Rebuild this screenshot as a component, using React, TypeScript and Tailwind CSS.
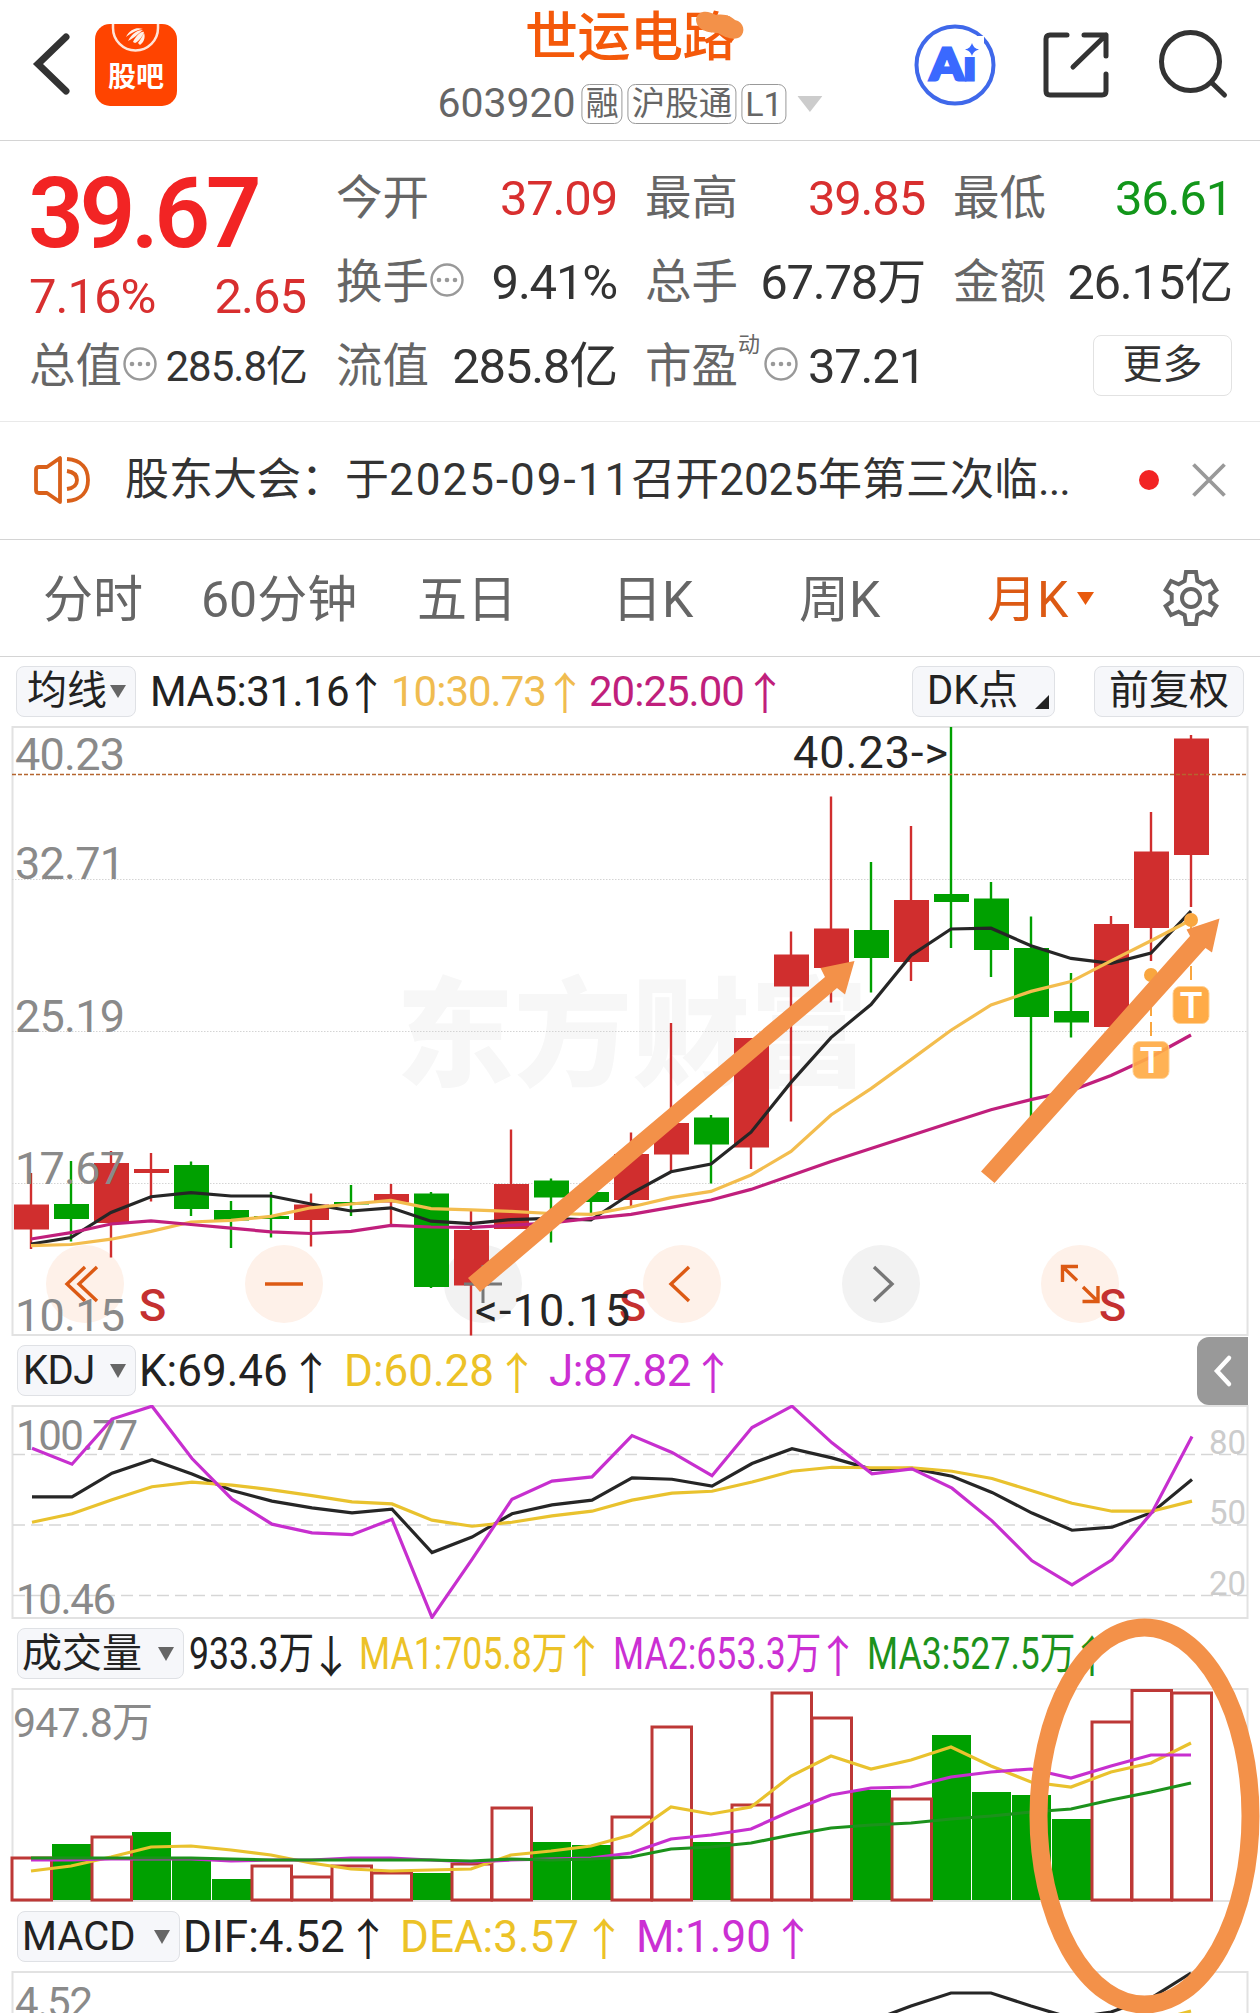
import type { ReactNode } from "react";
import clsx from "clsx";

type Candle = [up: boolean, high: number, top: number, bottom: number, low: number];

const RED = "#d02e2e";
const GREEN = "#00a000";
const ORANGE = "#f39149";

const candles: Candle[] = [
  [true, 453, 484.5, 509.5, 529],
  [false, 441, 484, 499, 521.5],
  [true, 431, 443, 503, 537.5],
  [true, 433, 449, 453, 481.5],
  [false, 441.5, 445, 489, 496],
  [false, 481, 490, 500.5, 528],
  [false, 472, 496, 499, 517.5],
  [true, 473.5, 484.5, 500, 526.5],
  [false, 465, 482, 484.5, 496],
  [true, 464, 474, 482.5, 505],
  [false, 472, 473.5, 567, 568],
  [true, 490, 510, 565.5, 615.5],
  [true, 409.5, 464, 509, 509],
  [false, 458.5, 460.5, 477.5, 522.5],
  [false, 469.5, 472, 482, 496],
  [true, 412.5, 434, 480, 486.5],
  [true, 303, 403, 434.5, 451],
  [false, 395, 397.5, 424.5, 463.5],
  [true, 318, 318, 427.5, 449],
  [true, 211.5, 234.5, 266.5, 401.5],
  [true, 76.5, 208.5, 248, 282.5],
  [false, 142, 210, 238, 272.5],
  [true, 106, 180, 242, 261],
  [false, 7, 174, 182, 228],
  [false, 162, 178.5, 230, 257],
  [false, 196.5, 228, 297, 400],
  [false, 253, 291, 302.5, 317.5],
  [true, 196, 204, 307, 307],
  [true, 92, 131.5, 208, 241],
  [true, 15, 18.5, 135, 187],
];

const ma5 = [
  524, 517.5, 492.5, 476.7, 472.7, 476, 476, 484, 491, 487.8, 501.2, 503.7,
  499.6, 498.4, 500, 473.5, 451.8, 444, 412.2, 362.4, 317.6, 284.5, 235.5, 209,
  208.2, 225.7, 238.4, 243.3, 233, 191,
];
const ma10 = [
  525.7, 524.5, 519.2, 511.4, 502, 500.4, 496.3, 487.8, 484, 480.4, 488.6,
  489.8, 491.4, 493.5, 494.3, 487, 477.6, 471.4, 455, 431.4, 395, 368.6, 339.6,
  310.2, 285, 271.4, 261.6, 240.8, 220.8, 200,
];
const ma20 = [
  519, 512.7, 504, 500.8, 504.5, 508.2, 511.8, 513.5, 511.4, 505.3, 507, 507.3,
  505.3, 502.9, 498.4, 494.3, 487.3, 480, 469.4, 455.5, 441.6, 428.6, 415.5,
  402.4, 389.8, 379.6, 370.6, 355.5, 337, 315,
];

const kLine = [
  62.1, 62.1, 72.2, 77.9, 71.8, 64.8, 60.3, 57.4, 55.3, 56.9, 38.4, 45, 54.9,
  58.7, 60.7, 70.2, 69.6, 66.7, 76.3, 82.6, 78.7, 73.8, 74.2, 70.9, 64, 55.2,
  47.9, 49.2, 55.5, 69.5,
];
const dLine = [
  51.3, 54.9, 60.9, 66.4, 68.4, 67.1, 65.1, 62.6, 60, 59.1, 52.2, 49.6, 51.3,
  54, 56, 60.7, 63.7, 64.5, 68.4, 73, 74.7, 74.5, 74.5, 73, 69.9, 64.7, 59.4,
  56, 56, 60.3,
];
const jLine = [
  82.8, 76, 95.2, 100.7, 78.4, 61.1, 50.5, 46.8, 46, 52.6, 10.8, 35.5, 61.1,
  68.8, 70.6, 88.2, 81, 71.1, 91.6, 100.7, 85.1, 71.9, 74, 65.8, 51.9, 34.9,
  24.7, 35.3, 55.5, 87.8,
];

const volTops = [
  168, 155, 147, 143, 170, 190, 176, 187, 176, 183, 184, 174, 118, 153, 156,
  127, 37, 153, 115, 3, 28, 101, 109, 46, 103, 106, 130, 32, 0.5, 3,
];
const volUp = [0, 2, 6, 7, 8, 9, 11, 12, 15, 16, 18, 19, 20, 22, 27, 28, 29];
const vma1 = [
  182, 177, 168, 158, 157, 161, 166, 174, 180, 182, 181, 180, 166, 162, 157,
  146, 118, 125, 118, 87, 67, 80, 71, 58, 77, 93, 98, 83, 74, 54,
];
const vma2 = [
  171, 171, 170, 170, 170, 172, 171, 171, 169, 169, 171, 173, 171, 170, 169,
  164, 150, 146, 140, 122, 106, 99, 98, 88, 83, 80, 89, 77, 66, 66,
];
const vma3 = [
  169, 169, 169, 169, 169, 170, 171, 171, 171, 171, 171, 172, 170, 171, 170,
  168, 160, 158, 154, 146, 139, 136, 134, 130, 127, 123, 120, 111, 103, 94,
];

const toPoints = (ys: number[], scale = (v: number) => v, x0 = 31) =>
  ys.map((v, i) => `${x0 + i * 40},${scale(v)}`).join(" ");

const kdjY = (v: number) => (100.77 - v) * 2.35;

function Line({ points, color }: { points: string; color: string }) {
  return <polyline points={points} fill="none" stroke={color} strokeWidth="3.2" />;
}

function Dots() {
  return (
    <svg className="mb-[5px] ml-[1px] h-[34px] w-[34px] shrink-0" viewBox="0 0 34 34">
      <circle cx="17" cy="17" r="15.5" fill="none" stroke="#999" strokeWidth="2.4" />
      <circle cx="9" cy="17" r="2.3" fill="#999" />
      <circle cx="17" cy="17" r="2.3" fill="#999" />
      <circle cx="25" cy="17" r="2.3" fill="#999" />
    </svg>
  );
}

function Triangle({ className }: { className: string }) {
  return (
    <svg className={clsx("shrink-0", className)} viewBox="0 0 16 14" preserveAspectRatio="none">
      <path d="M0 0H16L8 14Z" fill="currentColor" />
    </svg>
  );
}

function Stat({
  label,
  value,
  extra,
  className = "text-[#333]",
}: {
  label: string;
  value: string;
  extra?: ReactNode;
  className?: string;
}) {
  return (
    <div className="flex h-[84px] items-center pt-[3px]">
      <span className="text-[46.5px] text-[#666]">{label}</span>
      {extra}
      <span className={clsx("-mr-[2px] ml-auto text-[49px] tracking-[-1.2px]", className)}>{value}</span>
    </div>
  );
}

function Pill({ children, className }: { children: ReactNode; className?: string }) {
  return (
    <div
      className={clsx(
        "flex h-[51px] shrink-0 items-center rounded-lg border-[1.5px] border-[#dfe1e5] bg-[#f6f7fa] text-[40px] text-[#222]",
        className,
      )}
    >
      {children}
    </div>
  );
}

function Legend({
  text,
  arrow,
  className,
  inner,
}: {
  text: string;
  arrow: string;
  className: string;
  inner?: string;
}) {
  return (
    <div className={clsx("flex shrink-0 items-center justify-between", className)}>
      <span className={clsx("w-0 origin-left whitespace-nowrap", inner)}>{text}</span>
      <span className="flex w-[22px] justify-center font-['Noto_Sans_CJK_SC',sans-serif] text-[44px] leading-[44px]">
        {arrow}
      </span>
    </div>
  );
}

function Header() {
  return (
    <header className="relative flex h-[141px] items-start border-b border-[#d4d4d4]">
      <svg className="mt-[32px] ml-[32px] h-[64px] w-[40px]" viewBox="0 0 40 64">
        <path d="M34 5L6 32L34 59" fill="none" stroke="#333" strokeWidth="7" strokeLinecap="round" />
      </svg>
      <div className="relative mt-[24px] ml-[23px] h-[82px] w-[82px] overflow-hidden rounded-[15px] bg-[#ff4400]">
        <svg className="absolute inset-0" viewBox="0 0 82 82">
          <path d="M18 -2V4A22.5 22.5 0 0 0 63 4V-2" fill="none" stroke="#ffe4d8" strokeWidth="2.5" />
          <path
            d="M31 13C35 5 42 3 48 5C44 5 36 9 31 13ZM33 17C37 9 43 6 48 6C44 9 38 15 33 17ZM38 18C41 12 46 7 49 8C48 12 43 18 40 19ZM43 19C46 15 48 11 49 9C51 14 48 19 45 21Z"
            fill="#fff0e8"
          />
        </svg>
        <span className="mt-[34px] block text-center text-[28px] leading-[40px] font-bold text-white">
          股吧
        </span>
      </div>
      <div className="absolute left-1/2 flex -translate-x-1/2 flex-col items-center">
        <h1 className="mt-[5px] text-[53px] leading-[66px] font-medium tracking-[-0.5px] text-[#f4590a]">
          世运电路
        </h1>
        <div className="mt-[12px] flex h-[42px] items-center gap-[5px] text-[#666]">
          <span className="mr-[1px] text-[41px]">603920</span>
          <span className="rounded-lg border-[1.5px] border-[#999] px-[3px] text-[33px] leading-[38px]">融</span>
          <span className="rounded-lg border-[1.5px] border-[#999] px-[3px] text-[33.5px] leading-[38px]">沪股通</span>
          <span className="rounded-lg border-[1.5px] border-[#999] px-[3px] text-[34px] leading-[38px]">L1</span>
          <Triangle className="ml-[6px] h-[16px] w-[25px] text-[#ccc]" />
        </div>
      </div>
      <svg className="mt-[24px] ml-auto h-[82px] w-[82px]" viewBox="0 0 82 82">
        <circle cx="41" cy="41" r="38.5" fill="none" stroke="#3f68ea" strokeWidth="4" />
        <text
          x="16"
          y="56"
          fontSize="44"
          fontWeight="900"
          fill="#3a69ff"
          stroke="#3a69ff"
          strokeWidth="3"
          fontFamily="Lato, sans-serif"
          textLength="46"
          lengthAdjust="spacingAndGlyphs"
        >
          Ai
        </text>
        <path d="M47 12H70V33H47Z" fill="#fff" />
        <path d="M58 19C59.5 23 61 24.5 65 25.5C61 26.5 59.5 28 58 32C56.5 28 55 26.5 51 25.5C55 24.5 56.5 23 58 19Z" fill="#3a69ff" />
      </svg>
      <svg className="mt-[30px] ml-[45px] h-[70px] w-[70px]" viewBox="0 0 70 70">
        <g fill="none" stroke="#333" strokeWidth="5" strokeLinecap="round" strokeLinejoin="round">
          <path d="M26 5H9Q5 5 5 9V61Q5 65 9 65H61Q65 65 65 61V44" />
          <path d="M43 5H65V26M65 5L32 37" />
        </g>
      </svg>
      <svg className="mt-[28px] mr-[30px] ml-[45px] h-[74px] w-[74px]" viewBox="0 0 74 74">
        <g fill="none" stroke="#333" strokeWidth="5" strokeLinecap="round">
          <circle cx="34.5" cy="33.5" r="29" />
          <path d="M56 55L68.5 67" />
        </g>
      </svg>
    </header>
  );
}

function Quote() {
  return (
    <section className="grid h-[281px] grid-cols-[276px_279px_278px_277px] gap-x-[30px] border-b border-[#e9e9e9] pt-[14px] pl-[30px]">
      <div>
        <div className="-ml-[2px] flex h-[100px] items-center pt-[17px] text-[98px] leading-none font-semibold tracking-[-4.5px] text-[#f22424]">
          39.67
        </div>
        <div className="-ml-[1px] flex h-[68px] items-center justify-between pt-[15px] text-[49px] tracking-[-1px] text-[#d82f2f]">
          <span>7.16%</span>
          <span>2.65</span>
        </div>
        <div className="-mr-[1px] -ml-[1px] flex h-[84px] items-center pt-[3px]">
          <span className="text-[46.5px] text-[#666]">总值</span>
          <Dots />
          <span className="ml-auto text-[42px] tracking-[-1px] text-[#333]">285.8亿</span>
        </div>
      </div>
      <div>
        <Stat label="今开" value="37.09" className="text-[#d82f2f]" />
        <Stat label="换手" value="9.41%" extra={<Dots />} />
        <Stat label="流值" value="285.8亿" />
      </div>
      <div>
        <Stat label="最高" value="39.85" className="text-[#d82f2f]" />
        <Stat label="总手" value="67.78万" />
        <Stat
          label="市盈"
          value="37.21"
          extra={
            <>
              <span className="mb-[44px] w-[25px] text-[22px] text-[#666]">动</span>
              <Dots />
            </>
          }
        />
      </div>
      <div>
        <Stat label="最低" value="36.61" className="text-[#12961a]" />
        <Stat label="金额" value="26.15亿" />
        <div className="-mr-[2px] flex h-[84px] items-center justify-end">
          <button className="h-[61px] w-[139px] rounded-lg border-[1.5px] border-[#e2e2e2] text-[40px] leading-[56px] text-[#333]">
            更多
          </button>
        </div>
      </div>
    </section>
  );
}

function Notice() {
  return (
    <section className="flex h-[118px] items-center border-b border-[#d4d4d4] pb-[2px] pl-[32px]">
      <svg className="h-[52px] w-[60px]" viewBox="0 0 60 52">
        <g fill="none" stroke="#d9601a" strokeWidth="3.8" strokeLinejoin="round">
          <path d="M28 4V48L15 39H7Q4 39 4 36V16Q4 13 7 13H15Z" />
          <path d="M35 5C50 6 56 15 56 26C56 37 50 46 35 47" />
          <path d="M35 17C42 18 45 21 45 26C45 31 42 34 35 35" />
        </g>
      </svg>
      <span className="ml-[33px] text-[44px] whitespace-nowrap text-[#333]">
        股东大会：于<span className="tracking-[2px]">2025-09-11</span>召开2025年第三次临
        <span className="tracking-[-1px]">...</span>
      </span>
      <span className="ml-auto h-[20px] w-[20px] rounded-full bg-[#f22424]" />
      <svg className="mr-[34px] ml-[33px] h-[34px] w-[34px]" viewBox="0 0 34 34">
        <path d="M1.5 1.5L32.5 32.5M32.5 1.5L1.5 32.5" stroke="#999" strokeWidth="3.8" />
      </svg>
    </section>
  );
}

function Tabs() {
  return (
    <nav className="flex h-[117px] items-center border-b border-[#d4d4d4] pl-[43px] text-[50px] text-[#666]">
      <span className="w-[158px] pt-[5px]">分时</span>
      <span className="w-[216px] pt-[5px]">60分钟</span>
      <span className="w-[195px] pt-[5px]">五日</span>
      <span className="w-[187px] pt-[5px]">日K</span>
      <span className="w-[188px] pt-[5px]">周K</span>
      <span className="pt-[5px] text-[#dc5a14]">月K</span>
      <Triangle className="ml-[9px] h-[13px] w-[17px] text-[#e8590c]" />
      <svg className="mr-[40px] ml-auto h-[58px] w-[58px]" viewBox="-87 -87 174 174">
        <g fill="none" stroke="#666" strokeWidth="12">
          <path d="M-15 -78H15L19 -51L37 -41L60 -51L76 -24L58 -11V11L76 24L60 51L37 41L19 51L15 78H-15L-19 51L-37 41L-60 51L-76 24L-58 11V-11L-76 -24L-60 -51L-37 -41L-19 -51Z" />
          <circle r="27" />
        </g>
      </svg>
    </nav>
  );
}

function PriceChart() {
  return (
    <svg className="block h-[616px] w-full" viewBox="0 0 1260 616" fontFamily="inherit">
      <text x="396" y="357" fontSize="118" fontWeight="900" fill="#f7f7f7">
        东方财富
      </text>
      <rect x="12.5" y="7" width="1235" height="608" fill="none" stroke="#e2e2e2" strokeWidth="2" />
      {[159.5, 311.5, 463.5].map((y) => (
        <path key={y} d={`M12 ${y}H1247`} stroke="#d4d4d4" strokeDasharray="1.5 1.5" />
      ))}
      {[85, 284, 483, 682, 881, 1080].map((x) => (
        <circle key={x} cx={x} cy="564" r="39" fill={x === 483 || x === 881 ? "#f2f2f2" : "#fef1e9"} />
      ))}
      <g fill="none" stroke="#dc5a14" strokeWidth="3.4">
        <path d="M85 547L67 564L85 581M97 547L79 564L97 581" />
        <path d="M265 564H303" />
        <path d="M689 547L671 564L689 581" />
        <path d="M1078 546.5H1062.5V562M1062.5 546.5L1077 560.5M1098 566V581.5H1082.5M1098 581.5L1083 567" />
        <path d="M874 547L892 564L874 581" stroke="#777" />
      </g>
      {candles.map(([up, high, top, bottom, low], i) => {
        const fill = up ? RED : GREEN;
        const x = 31 + i * 40;
        return (
          <g key={i} fill={fill}>
            <rect x={x - 1.2} y={high} width="2.4" height={low - high} />
            <rect x={x - 17} y={top} width="35" height={bottom - top} />
          </g>
        );
      })}
      <path d="M464 564H502M483 545V583" stroke="#777" strokeWidth="3" />
      <path d="M12 54.5H1247" stroke="#b5652f" strokeWidth="1.3" strokeDasharray="4 2" />
      <Line points={toPoints(ma5)} color="#262626" />
      <Line points={toPoints(ma10)} color="#f3bd4e" />
      <Line points={toPoints(ma20)} color="#c01f7c" />
      <g fontSize="45" fill="#8a8a8a">
        <text x="15" y="50" textLength="110">40.23</text>
        <text x="15" y="159" textLength="110">32.71</text>
        <text x="15" y="312" textLength="110">25.19</text>
        <text x="15" y="464" textLength="110">17.67</text>
        <text x="15" y="611" textLength="110">10.15</text>
      </g>
      <g fontSize="45" fontWeight="500" fill="#c43030">
        <text x="139" y="601">S</text>
        <text x="619" y="601">S</text>
        <text x="1099" y="601">S</text>
      </g>
      <g fontSize="45" fill="#262626">
        <text x="793" y="48" textLength="155">{"40.23->"}</text>
        <text x="475" y="606" textLength="155">{"<-10.15"}</text>
      </g>
      <g fill="#f9a63f">
        <circle cx="1191" cy="200" r="7" />
        <circle cx="1151" cy="255" r="7" />
        <path d="M1191 206V266M1151 262V321" stroke="#f9a63f" strokeWidth="2" strokeDasharray="14 6" />
        <rect x="1173" y="266.5" width="36" height="37" rx="7" fill="#ffab47" stroke="#ffd296" />
        <rect x="1133" y="321.5" width="36" height="37" rx="7" fill="#ffab47" fillOpacity="0.92" stroke="#ffd296" />
      </g>
      <g fontSize="37" fontWeight="600" fill="#fff" textAnchor="middle">
        <text x="1191" y="298">T</text>
        <text x="1151" y="353">T</text>
      </g>
    </svg>
  );
}

function KdjChart() {
  return (
    <svg className="block h-[214px] w-full" viewBox="0 -1 1260 214" fontFamily="inherit">
      <rect x="12.5" y="0" width="1235" height="212" fill="none" stroke="#e2e2e2" strokeWidth="2" />
      {[48.5, 119, 189.5].map((y) => (
        <path key={y} d={`M13 ${y}H1247`} stroke="#d6d6d6" strokeWidth="1.5" strokeDasharray="12 6" />
      ))}
      <g fontSize="42" fill="#8a8a8a">
        <text x="16" y="44" textLength="122">100.77</text>
        <text x="16" y="208" textLength="100">10.46</text>
      </g>
      <g fontSize="33" fill="#ccc" textAnchor="end">
        <text x="1246" y="48">80</text>
        <text x="1246" y="118">50</text>
        <text x="1246" y="189">20</text>
      </g>
      <Line points={toPoints(kLine, kdjY, 32)} color="#262626" />
      <Line points={toPoints(dLine, kdjY, 32)} color="#e9c22e" />
      <Line points={toPoints(jLine, kdjY, 32)} color="#c72fcf" />
    </svg>
  );
}

function VolumeChart() {
  return (
    <svg className="block h-[214px] w-full" viewBox="0 -1 1260 214" fontFamily="inherit">
      <rect x="12.5" y="0" width="1235" height="212" fill="none" stroke="#e2e2e2" strokeWidth="2" />
      <text x="13" y="48" fontSize="41" fill="#8a8a8a" textLength="140">
        947.8万
      </text>
      {volTops.map((top, i) =>
        volUp.includes(i) ? null : (
          <rect key={i} x={12 + i * 40} y={top} width="39" height={211 - top} fill={GREEN} />
        ),
      )}
      {volUp.map((i) => (
        <rect
          key={i}
          x={12 + i * 40}
          y={volTops[i] + 1}
          width="39.5"
          height={210 - volTops[i]}
          fill="#fff"
          stroke="#bd3836"
          strokeWidth="3"
        />
      ))}
      <Line points={toPoints(vma1)} color="#e9c22e" />
      <Line points={toPoints(vma2)} color="#c72fcf" />
      <Line points={toPoints(vma3)} color="#1c921c" />
    </svg>
  );
}

function MacdChart() {
  return (
    <svg className="block h-[42px] w-full" viewBox="0 0 1260 42" fontFamily="inherit">
      <path d="M12.5 42V1H1247.5V42" fill="none" stroke="#e2e2e2" strokeWidth="2" />
      <text x="15" y="46" fontSize="42" fill="#8a8a8a" textLength="78">
        4.52
      </text>
      <Line points="871,50 911,35 951,22 991,22 1031,35 1071,47 1111,41 1151,27 1191,2" color="#262626" />
      <Line points="1151,51 1191,40" color="#e9c22e" />
    </svg>
  );
}

// hand-drawn marks over the page
function Marks() {
  return (
    <svg className="pointer-events-none absolute inset-0 h-[2013px] w-[1260px]" viewBox="0 0 1260 2013">
      <g fill={ORANGE}>
        <path d="M696 19C698 10 708 10 716 15C726 13 733 18 735 20C744 22 746 32 740 37C734 41 724 37 718 33C708 33 696 30 696 19Z" />
        <path d="M468 1278L825 977L820.5 968L854.5 961L845 994.5L837 988L480 1292Z" />
        <path d="M981 1171.5L1190 936L1186.5 929.5L1219.5 918.5L1212 952.5L1205.5 948L994.5 1183Z" />
      </g>
      <ellipse cx="1144.5" cy="1816" rx="106" ry="188.5" fill="none" stroke={ORANGE} strokeWidth="18" />
    </svg>
  );
}

export default function App() {
  return (
    <div className="relative h-[2013px] w-[1260px] overflow-hidden bg-white font-[Roboto,'Noto_Sans_CJK_SC',sans-serif]">
      <Header />
      <Quote />
      <Notice />
      <Tabs />

      <div className="flex h-[63px] items-center pt-[5px] pl-[16px] text-[42px]">
        <Pill className="w-[120px] pl-[10px]">
          均线
          <Triangle className="ml-[3px] h-[13px] w-[16px] text-[#666]" />
        </Pill>
        <Legend className="ml-[14px] w-[227px] text-[#222]" inner="tracking-[-0.5px]" text="MA5:31.16" arrow="↑" />
        <Legend className="ml-[14px] w-[185px] text-[#f0bc50]" inner="tracking-[-1px]" text="10:30.73" arrow="↑" />
        <Legend className="ml-[13px] w-[187px] text-[#c01f7c]" inner="tracking-[-1px]" text="20:25.00" arrow="↑" />
        <Pill className="ml-auto w-[143px] pl-[14px]">
          DK点
          <svg className="mt-[22px] ml-auto mr-[5px] h-[14px] w-[14px]" viewBox="0 0 14 14">
            <path d="M14 0V14H0Z" fill="#222" />
          </svg>
        </Pill>
        <Pill className="mr-[16px] ml-[39px] w-[150px] justify-center">前复权</Pill>
      </div>
      <PriceChart />

      <div className="flex h-[69px] items-center pl-[17px] text-[44px]">
        <Pill className="w-[119px] justify-between pr-[9px] pl-[5px]">
          <span className="tracking-[-0.5px]">KDJ</span>
          <Triangle className="h-[14px] w-[16px] text-[#666]" />
        </Pill>
        <Legend className="ml-[3px] w-[183px] text-[#222]" text="K:69.46" arrow="↑" />
        <Legend className="ml-[22px] w-[184px] text-[#ecc227]" text="D:60.28" arrow="↑" />
        <Legend className="ml-[21px] w-[175px] text-[#cb2fd3]" inner="tracking-[-0.5px]" text="J:87.82" arrow="↑" />
        <button className="mr-[12px] ml-auto flex h-[68px] w-[51px] items-center justify-center rounded-l-xl bg-[#999]">
          <svg className="h-[34px] w-[20px]" viewBox="0 0 20 34">
            <path d="M16 4L4 17L16 30" fill="none" stroke="#fff" strokeWidth="4.5" strokeLinecap="round" />
          </svg>
        </button>
      </div>
      <KdjChart />

      <div className="flex h-[69px] items-center pl-[17px] text-[44px]">
        <Pill className="w-[167px] justify-between pr-[9px] pl-[4px]">
          成交量
          <Triangle className="h-[14px] w-[16px] text-[#666]" />
        </Pill>
        <Legend className="ml-[5px] w-[153px] text-[#222]" inner="scale-x-[0.81]" text="933.3万" arrow="↓" />
        <Legend className="ml-[17px] w-[236px] text-[#ecc227]" inner="scale-x-[0.81]" text="MA1:705.8万" arrow="↑" />
        <Legend className="ml-[18px] w-[236px] text-[#cb2fd3]" inner="scale-x-[0.81]" text="MA2:653.3万" arrow="↑" />
        <Legend className="ml-[18px] w-[236px] text-[#1c921c]" inner="scale-x-[0.81]" text="MA3:527.5万" arrow="↑" />
      </div>
      <VolumeChart />

      <div className="flex h-[69px] items-center pl-[17px] text-[44px]">
        <Pill className="w-[163px] justify-between pr-[9px] pl-[4px]">
          <span>MACD</span>
          <Triangle className="h-[14px] w-[16px] text-[#666]" />
        </Pill>
        <Legend className="ml-[3px] w-[196px] text-[#222]" text="DIF:4.52" arrow="↑" />
        <Legend className="ml-[21px] w-[215px] text-[#ecc227]" text="DEA:3.57" arrow="↑" />
        <Legend className="ml-[21px] w-[168px] text-[#cb2fd3]" text="M:1.90" arrow="↑" />
      </div>
      <MacdChart />
      <Marks />
    </div>
  );
}
